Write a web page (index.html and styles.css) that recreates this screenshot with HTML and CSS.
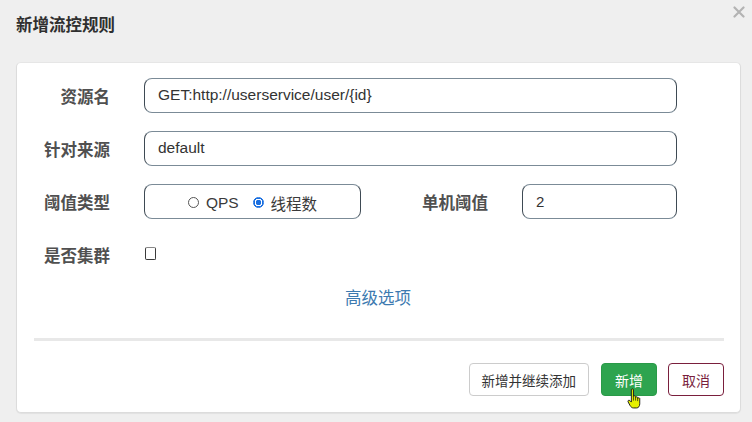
FILE: index.html
```html
<!DOCTYPE html>
<html lang="zh-CN">
<head>
<meta charset="utf-8">
<title>新增流控规则</title>
<link rel="stylesheet" href="styles.css">
</head>
<body>
<div class="dialog">
  <div class="header">
    <h1 class="title">新增流控规则</h1>
    <svg class="close" width="12" height="12" viewBox="0 0 12 12" aria-label="关闭">
      <path d="M1.5 1.5 L10.5 10.5 M10.5 1.5 L1.5 10.5" stroke="#b3b3b3" stroke-width="2.2" stroke-linecap="round"/>
    </svg>
  </div>
  <div class="card">
    <form class="form">
      <div class="row">
        <label class="label">资源名</label>
        <input class="field" type="text" value="GET:http://userservice/user/{id}">
      </div>
      <div class="row">
        <label class="label">针对来源</label>
        <input class="field" type="text" value="default">
      </div>
      <div class="row">
        <label class="label">阈值类型</label>
        <div class="split">
          <div class="radio-box">
            <label class="radio"><input type="radio" name="grade"><span>QPS</span></label>
            <label class="radio"><input type="radio" name="grade" checked><span>线程数</span></label>
          </div>
          <label class="label label-mid">单机阈值</label>
          <input class="field field-small" type="text" value="2">
        </div>
      </div>
      <div class="row row-check">
        <label class="label">是否集群</label>
        <div class="check-cell"><input class="check" type="checkbox"></div>
      </div>
    </form>
    <div class="advanced"><a class="link">高级选项</a></div>
    <div class="sep"></div>
    <div class="footer">
      <button class="btn btn-default btn-wide" type="button">新增并继续添加</button>
      <button class="btn btn-primary" type="button">新增
        <svg class="cursor" width="15" height="21" viewBox="0 0 14 20">
          <path d="M4 1.6 C4 0.6 6 0.6 6 1.6 V8 C6 7.2 8 7.2 8 8 V9 C8 8.2 10 8.2 10 9 V10 C10 9.2 12 9.2 12 10 V15 C12 17.3 10.8 19 9 19 H6 C4.6 19 3.6 18 2.7 16.6 L0.9 13.2 C0.4 12.1 1.5 11.1 2.5 11.9 L4 13.4 Z" fill="#e6f000" stroke="#1a1a1a" stroke-width="0.9" stroke-linejoin="round"/>
          <path d="M6 8 V12 M8 9 V12 M10 10 V12.5" stroke="#1a1a1a" stroke-width="0.7"/>
        </svg>
      </button>
      <button class="btn btn-cancel" type="button">取消</button>
    </div>
  </div>
</div>
</body>
</html>
```
FILE: styles.css
```css
* { box-sizing: border-box; }

html, body {
  margin: 0;
  padding: 0;
  background: #efefef;
  font-family: "Liberation Sans", "Noto Sans CJK SC", sans-serif;
  color: #333;
}

.dialog {
  width: 752px;
  height: 422px;
}

.header {
  display: flex;
  justify-content: space-between;
  align-items: flex-start;
  height: 62px;
  padding-left: 16px;
}

.title {
  margin: 15px 0 0;
  font-size: 16.5px;
  line-height: 20px;
  font-weight: bold;
  color: #2f2f2f;
}

.close {
  margin-top: 6px;
  margin-right: 7px;
}

.card {
  margin: 0 11px 0 16px;
  background: #fff;
  border: 1px solid #dcdcdc;
  border-top-color: #e6e6e6;
  border-radius: 5px;
  box-shadow: 0 1px 1px rgba(0,0,0,0.06);
  padding: 15px 16px 16px 17px;
}

.form {
  display: flex;
  flex-direction: column;
  gap: 18px;
  margin: 0;
}

.row {
  display: grid;
  grid-template-columns: 76px 533px;
  column-gap: 34px;
  align-items: center;
  height: 35px;
}

.label {
  text-align: right;
  font-size: 16.5px;
  font-weight: bold;
  color: #505050;
  white-space: nowrap;
  padding-top: 1px;
}

.field {
  height: 35px;
  width: 100%;
  border: 1px solid #7b8b97;
  border-left-color: #3e4a54;
  border-right-color: #3e4a54;
  border-radius: 8px;
  padding: 0 13px 2px;
  font-family: "Liberation Sans", "Noto Sans CJK SC", sans-serif;
  font-size: 15.5px;
  color: #333;
  background: #fff;
  outline: none;
}

.split {
  display: flex;
  align-items: center;
  height: 35px;
}

.radio-box {
  width: 217px;
  height: 35px;
  border: 1px solid #7b8b97;
  border-left-color: #3e4a54;
  border-right-color: #3e4a54;
  border-radius: 8px;
  display: flex;
  align-items: center;
  justify-content: center;
  gap: 14px;
  padding-top: 2px;
}

.radio {
  display: flex;
  align-items: center;
  gap: 7px;
  font-size: 15.5px;
  color: #3a3a3a;
}

.radio input {
  appearance: none;
  -webkit-appearance: none;
  margin: 0;
  width: 11px;
  height: 11px;
  border-radius: 50%;
  border: 1px solid #555;
  background: #fff;
}

.radio input:checked {
  border: 1px solid #1a6fe0;
  background: radial-gradient(circle, #1a6fe0 0 2.6px, #fff 3px 3.6px, #1a6fe0 4px);
}

.label-mid {
  flex: 1;
  padding-right: 4px;
}

.field-small {
  width: 155px;
  margin-left: 30px;
  font-size: 15px;
  padding-bottom: 1px;
}

.check-cell {
  display: flex;
  align-items: center;
}

.check {
  appearance: none;
  -webkit-appearance: none;
  margin: 0 0 3px 1px;
  width: 11px;
  height: 13px;
  border: 1px solid #3a3a3a;
  border-top-color: #888;
  border-radius: 2px;
  background: #fff;
}

.advanced {
  margin-top: 16px;
  text-align: center;
  line-height: 20px;
  padding-right: 2px;
}

.link {
  font-size: 16.5px;
  color: #3d7ab0;
  cursor: pointer;
}

.sep {
  height: 3px;
  background: #e8e8e8;
  margin-top: 29px;
}

.footer {
  display: flex;
  justify-content: flex-end;
  gap: 11px;
  margin-top: 22px;
}

.btn {
  position: relative;
  height: 33px;
  padding: 0 13px;
  border-radius: 4px;
  font-family: "Liberation Sans", "Noto Sans CJK SC", sans-serif;
  font-size: 14px;
  background: #fff;
  border: 1px solid #ccc;
  color: #333;
}

.btn-wide {
  font-size: 13.5px;
  padding: 0 12px;
  margin-right: 1px;
}

.btn-primary {
  background: #2ea44f;
  border-color: #2a9a48;
  color: #fff;
}

.btn-cancel {
  border-color: #7a1f3d;
  color: #7a1f3d;
}

.cursor {
  position: absolute;
  left: 25px;
  top: 24px;
}
```
